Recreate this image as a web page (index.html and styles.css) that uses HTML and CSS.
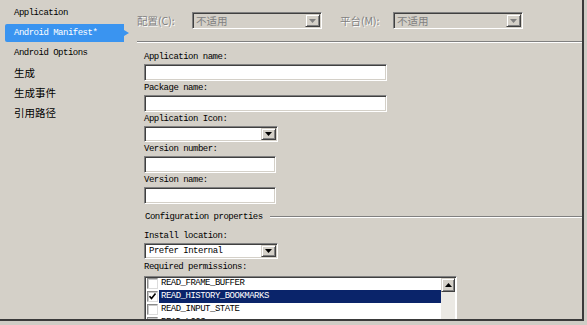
FILE: index.html
```html
<!DOCTYPE html>
<html>
<head>
<meta charset="utf-8">
<link rel="stylesheet" href="styles.css">
</head>
<body>
<div class="frame">
  <nav class="sidebar">
    <div class="nav-item latin">Application</div>
    <div class="nav-item latin selected"><span class="tab">Android Manifest*</span></div>
    <div class="nav-item latin">Android Options</div>
    <div class="nav-item cjk">生成</div>
    <div class="nav-item cjk">生成事件</div>
    <div class="nav-item cjk">引用路径</div>
  </nav>
  <main class="main">
    <div class="topbar">
      <span class="dis-label l1">配置(C):</span>
      <div class="combo disabled top-combo"><span class="combo-text">不适用</span><span class="drop-btn"><svg width="7" height="4" viewBox="0 0 7 4"><path d="M0 0h7L3.5 4z" fill="#808080"/></svg></span></div>
      <span class="dis-label l2">平台(M):</span>
      <div class="combo disabled top-combo"><span class="combo-text">不适用</span><span class="drop-btn"><svg width="7" height="4" viewBox="0 0 7 4"><path d="M0 0h7L3.5 4z" fill="#808080"/></svg></span></div>
    </div>
    <div class="form">
      <div class="label">Application name:</div>
      <div class="field wide"></div>
      <div class="label">Package name:</div>
      <div class="field wide"></div>
      <div class="label">Application Icon:</div>
      <div class="combo small-combo"><span class="combo-text"></span><span class="drop-btn"><svg width="7" height="4" viewBox="0 0 7 4"><path d="M0 0h7L3.5 4z" fill="#000"/></svg></span></div>
      <div class="label">Version number:</div>
      <div class="field narrow"></div>
      <div class="label">Version name:</div>
      <div class="field narrow"></div>
      <div class="section">
        <span class="section-title">Configuration properties</span>
        <span class="section-line"></span>
      </div>
      <div class="label">Install location:</div>
      <div class="combo small-combo"><span class="combo-text latin">Prefer Internal</span><span class="drop-btn"><svg width="7" height="4" viewBox="0 0 7 4"><path d="M0 0h7L3.5 4z" fill="#000"/></svg></span></div>
      <div class="label tall">Required permissions:</div>
      <div class="listbox">
        <div class="rows">
          <div class="row"><span class="check"></span><span class="row-text">READ_FRAME_BUFFER</span></div>
          <div class="row"><span class="check"><svg width="9" height="9" viewBox="0 0 9 9"><path d="M1.5 4.2l2 2.2 4-5" fill="none" stroke="#000" stroke-width="1.6"/></svg></span><span class="row-text sel">READ_HISTORY_BOOKMARKS</span></div>
          <div class="row"><span class="check"></span><span class="row-text">READ_INPUT_STATE</span></div>
          <div class="row"><span class="check"></span><span class="row-text">READ_LOGS</span></div>
        </div>
        <div class="scrollbar">
          <span class="scroll-btn"><svg width="7" height="4" viewBox="0 0 7 4"><path d="M0 4h7L3.5 0z" fill="#000"/></svg></span>
          <span class="track"></span>
        </div>
      </div>
    </div>
  </main>
</div>
</body>
</html>
```
FILE: styles.css
```css
html, body {
  margin: 0;
  padding: 0;
}
body {
  width: 587px;
  height: 325px;
  background: #cfccc5;
  overflow: hidden;
}
.frame {
  width: 582px;
  height: 319px;
  background: #d4d0c8;
  border-right: 2px solid #3a3a3a;
  border-bottom: 2px solid #3a3a3a;
  display: flex;
  overflow: hidden;
}
.latin, .label, .section-title, .row-text {
  font-family: "Liberation Mono", monospace;
  font-size: 9px;
  letter-spacing: -0.5px;
  color: #000;
}
.cjk, .dis-label, .combo-text {
  font-family: "Noto Sans CJK SC", sans-serif;
  font-size: 10.5px;
}
.sidebar {
  width: 133px;
  flex: none;
  padding-top: 3px;
}
.nav-item {
  height: 20px;
  line-height: 20px;
  padding-left: 14px;
  white-space: nowrap;
}
.nav-item.cjk {
  color: #000;
}
.nav-item.selected {
  padding-left: 5px;
  display: flex;
  align-items: center;
}
.tab {
  display: block;
  width: 115px;
  height: 18px;
  line-height: 18px;
  padding-left: 9px;
  background: #3a94f0;
  color: #fff;
  clip-path: polygon(0 0, 119px 0, 119px 6px, 124px 9px, 119px 12px, 119px 100%, 0 100%);
  border-radius: 2px 0 0 2px;
}
.main {
  flex: 1;
  display: flex;
  flex-direction: column;
  min-height: 0;
}
.main > * {
  flex-shrink: 0;
}
.topbar {
  height: 41px;
  margin-left: 4px;
  display: flex;
  align-items: center;
  border-bottom: 1px solid #808080;
  box-shadow: 0 1px 0 #fff;
}
.dis-label {
  color: #808080;
  text-shadow: 1px 1px 0 #fff;
  white-space: nowrap;
}
.l1 {
  width: 55px;
}
.l2 {
  width: 53px;
  margin-left: 18px;
}
.combo {
  box-sizing: border-box;
  display: flex;
  padding: 1px;
  border: 1px solid;
  border-color: #808080 #fff #fff #808080;
  box-shadow: inset 1px 1px 0 #404040, inset -1px -1px 0 #d4d0c8;
  background: #fff;
}
.combo.disabled {
  background: #d4d0c8;
}
.combo.disabled .combo-text {
  color: #808080;
}
.top-combo {
  width: 130px;
  height: 17px;
}
.combo-text {
  flex: 1;
  padding-left: 2px;
  line-height: 13px;
  overflow: hidden;
  white-space: nowrap;
}
.combo-text.latin {
  font-family: "Liberation Mono", monospace;
  font-size: 9px;
  letter-spacing: -0.5px;
  padding-left: 3px;
}
.drop-btn {
  box-sizing: border-box;
  width: 15px;
  display: flex;
  align-items: center;
  justify-content: center;
  background: #d4d0c8;
  border: 1px solid;
  border-color: #d4d0c8 #404040 #404040 #d4d0c8;
  box-shadow: inset 1px 1px 0 #fff, inset -1px -1px 0 #808080;
}
.form {
  padding: 8px 0 0 11px;
  display: flex;
  flex-direction: column;
  align-items: flex-start;
}
.form > * {
  flex-shrink: 0;
}
.label {
  height: 14px;
  line-height: 14px;
  white-space: nowrap;
}
.label.tall {
  height: 17px;
  line-height: 17px;
}
.field {
  box-sizing: border-box;
  height: 17px;
  border: 1px solid;
  border-color: #808080 #fff #fff #808080;
  box-shadow: inset 1px 1px 0 #404040, inset -1px -1px 0 #d4d0c8;
  background: #fff;
}
.field.wide {
  width: 243px;
}
.field.narrow {
  width: 132px;
}
.small-combo {
  width: 134px;
  height: 16px;
}
.section {
  height: 25px;
  align-self: stretch;
  display: flex;
  align-items: center;
  padding-left: 1px;
}
.section-title {
  white-space: nowrap;
}
.section-line {
  flex: 1;
  margin-left: 7px;
  height: 0;
  border-top: 1px solid #808080;
  border-bottom: 1px solid #fff;
}
.listbox {
  box-sizing: border-box;
  width: 313px;
  height: 60px;
  display: flex;
  border: 1px solid;
  border-color: #808080 #fff #fff #808080;
  box-shadow: inset 1px 1px 0 #404040;
  background: #fff;
}
.rows {
  flex: 1;
  display: flex;
  flex-direction: column;
  padding-left: 2px;
}
.row {
  height: 13px;
  display: flex;
  align-items: center;
}
.check {
  box-sizing: border-box;
  width: 11px;
  height: 11px;
  flex: none;
  display: flex;
  align-items: center;
  justify-content: center;
  border: 1px solid;
  border-color: #8a8a8a #dcdcdc #dcdcdc #8a8a8a;
  box-shadow: inset 1px 1px 0 #c8c8c8;
  background: #fff;
}
.row-text {
  flex: 1;
  margin-left: 1px;
  padding-left: 2px;
  height: 13px;
  line-height: 13px;
  white-space: nowrap;
}
.row-text.sel {
  background: #0a246a;
  color: #fff;
}
.scrollbar {
  width: 14px;
  flex: none;
  display: flex;
  flex-direction: column;
  margin-top: 1px;
  margin-right: 1px;
}
.scroll-btn {
  box-sizing: border-box;
  height: 14px;
  display: flex;
  align-items: center;
  justify-content: center;
  background: #d4d0c8;
  border: 1px solid;
  border-color: #d4d0c8 #404040 #404040 #d4d0c8;
  box-shadow: inset 1px 1px 0 #fff, inset -1px -1px 0 #808080;
}
.track {
  flex: 1;
  background: #ebe9e4;
}
```
